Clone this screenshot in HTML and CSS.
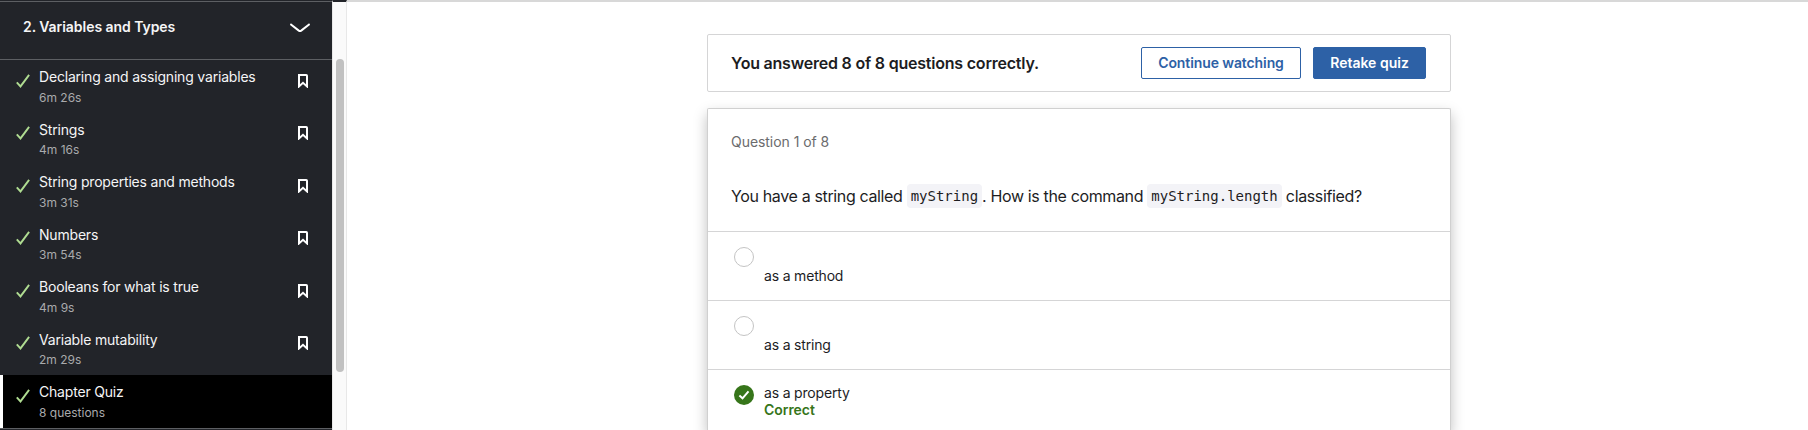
FILE: index.html
```html
<!DOCTYPE html>
<html lang="en">
<head>
<meta charset="utf-8">
<title>Chapter Quiz</title>
<link rel="stylesheet" href="styles.css">
</head>
<body>
<svg class="defs" width="0" height="0" aria-hidden="true">
  <symbol id="check" viewBox="0 0 14 14"><path d="M.8 8.3 4.5 12.4 13.1.9" fill="none" stroke="currentColor" stroke-width="1.9"/></symbol>
  <symbol id="bookmark" viewBox="0 0 10 14"><path d="M1 12.4V1H8.2Q9 1 9 1.8V12.4L5 8.8Z" fill="none" stroke="currentColor" stroke-width="2"/></symbol>
</svg>
<div class="app">
  <aside class="sidebar">
    <header class="chapter">
      <h2 class="chapter-title">2. Variables and Types</h2>
      <svg class="chevron" viewBox="0 0 20 10"><path d="M.3 1 8.8 7.6Q10 8.4 11.2 7.6L19.7 1" fill="none" stroke="currentColor" stroke-width="2"/></svg>
    </header>
    <ul class="lessons">
      <li class="lesson"><svg class="check"><use href="#check"/></svg><div class="info"><div class="name">Declaring and assigning variables</div><div class="time">6m 26s</div></div><svg class="bookmark"><use href="#bookmark"/></svg></li>
      <li class="lesson"><svg class="check"><use href="#check"/></svg><div class="info"><div class="name">Strings</div><div class="time">4m 16s</div></div><svg class="bookmark"><use href="#bookmark"/></svg></li>
      <li class="lesson"><svg class="check"><use href="#check"/></svg><div class="info"><div class="name">String properties and methods</div><div class="time">3m 31s</div></div><svg class="bookmark"><use href="#bookmark"/></svg></li>
      <li class="lesson"><svg class="check"><use href="#check"/></svg><div class="info"><div class="name">Numbers</div><div class="time">3m 54s</div></div><svg class="bookmark"><use href="#bookmark"/></svg></li>
      <li class="lesson"><svg class="check"><use href="#check"/></svg><div class="info"><div class="name">Booleans for what is true</div><div class="time">4m 9s</div></div><svg class="bookmark"><use href="#bookmark"/></svg></li>
      <li class="lesson"><svg class="check"><use href="#check"/></svg><div class="info"><div class="name">Variable mutability</div><div class="time">2m 29s</div></div><svg class="bookmark"><use href="#bookmark"/></svg></li>
      <li class="lesson current"><svg class="check"><use href="#check"/></svg><div class="info"><div class="name">Chapter Quiz</div><div class="time">8 questions</div></div></li>
    </ul>
  </aside>
  <div class="track"><div class="thumb"></div></div>
  <main class="main">
    <section class="result">
      <h1 class="result-text">You answered 8 of 8 questions correctly.</h1>
      <button class="btn continue">Continue watching</button>
      <button class="btn retake">Retake quiz</button>
    </section>
    <section class="card">
      <div class="question">
        <p class="count">Question 1 of 8</p>
        <p class="prompt">You have a string called <code>myString</code>. How is the command <code>myString.length</code> classified?</p>
      </div>
      <div class="option"><span class="radio"></span><span class="answer low">as a method</span></div>
      <div class="option"><span class="radio"></span><span class="answer low">as a string</span></div>
      <div class="option last"><svg class="correct-icon" viewBox="0 0 20 20"><circle cx="10" cy="10" r="10" fill="#36751a"/><path d="M5.4 10.6 8.5 13.3 14.5 6.4" fill="none" stroke="#fff" stroke-width="2"/></svg><span class="answer high">as a property<strong class="verdict">Correct</strong></span></div>
    </section>
  </main>
</div>
</body>
</html>
```

FILE: styles.css
```css
* { box-sizing: border-box; }
body { margin: 0; height: 430px; overflow: hidden; background: #fff; color: #1d1d1f; font-family: Inter, "Liberation Sans", sans-serif; }
h1, h2, p, ul { margin: 0; padding: 0; }
svg { display: block; flex: none; }
.defs { position: absolute; }
.app { display: flex; height: 430px; overflow: hidden; }
.sidebar { width: 332px; flex: none; background: #222429; color: #f5f5f6; padding-top: 1px; }
.chapter { height: 59px; display: flex; justify-content: space-between; padding: 16px 22px 0 23px; border-top: 1px solid #5d5f63; border-bottom: 1px solid #5d5f63; }
.chapter-title { font-size: 14px; line-height: 18px; font-weight: 600; letter-spacing: -.05px; white-space: nowrap; }
.chevron { width: 20px; height: 10px; margin-top: 5px; color: #fff; }
.lessons { list-style: none; border-bottom: 1px solid #5d5f63; }
.lesson { height: 52.5px; display: flex; padding: 7px 24px 0 16px; }
.check { width: 14px; height: 14px; margin-top: 6.5px; color: #afdc91; }
.info { flex: 1; padding-left: 9px; white-space: nowrap; }
.name { font-size: 14px; line-height: 20px; letter-spacing: -.19px; }
.time { font-size: 12px; line-height: 16px; margin-top: 2.6px; color: #a9aaac; }
.bookmark { width: 10px; height: 14px; margin-top: 6.8px; color: #fff; }
.current { height: 53px; background: #000; border-left: 3px solid #fff; padding-left: 13px; }
.track { width: 15px; flex: none; background: #fafafa; border: solid #e8e8e8; border-width: 2px 1px 0; border-top-color: #222429; padding: 57px 2px 0 3px; }
.thumb { width: 8px; height: 313px; border-radius: 4px; background: #c1c1c1; }
.main { flex: 1; border-top: 2px solid #d8d8d8; padding: 32px 0 0 360px; }
.result { width: 744px; height: 58px; display: flex; align-items: center; padding: 0 24px 0 23px; border: 1px solid #d5d5d6; border-radius: 2px; }
.result-text { flex: 1; font-size: 16px; line-height: 24px; font-weight: 600; letter-spacing: -.21px; white-space: nowrap; }
.btn { height: 32px; padding: 0; border: 1px solid #2d61a6; border-radius: 2px; font: 600 14px/20px Inter, sans-serif; letter-spacing: -.1px; white-space: nowrap; }
.continue { width: 160px; color: #2d61a6; background: #fff; }
.retake { width: 113px; margin-left: 12px; color: #fff; background: #2d61a6; letter-spacing: 0; }
.card { width: 744px; margin-top: 16px; border: 1px solid #d0d0d0; border-bottom: 0; border-radius: 2px 2px 0 0; background: #fff; box-shadow: 0 6px 14px rgba(0,0,0,.25); }
.question { height: 122px; padding: 23px 24px 0 23px; }
.count { font-size: 14px; line-height: 20px; letter-spacing: -.05px; color: #6b6b6d; }
.prompt { margin-top: 32px; font-size: 16px; line-height: 24px; letter-spacing: -.36px; white-space: nowrap; }
code { display: inline-block; height: 24px; padding: 0 4px; border-radius: 4px; background: #f3f3f7; font: 14px/24px "DejaVu Sans Mono", monospace; letter-spacing: 0; vertical-align: top; }
.option { height: 69px; display: flex; gap: 10px; padding: 15px 26px 0; border-top: 1px solid #d5d5d6; }
.last { height: 61px; }
.radio { width: 20px; height: 20px; border: 1px solid #c4c4c4; border-radius: 50%; }
.correct-icon { width: 20px; height: 20px; }
.answer { font-size: 14px; line-height: 17px; letter-spacing: -.18px; white-space: nowrap; }
.low { padding-top: 20px; }
.high { margin-top: -1px; }
.verdict { display: block; font-weight: 600; letter-spacing: -.05px; color: #36751a; }
```
